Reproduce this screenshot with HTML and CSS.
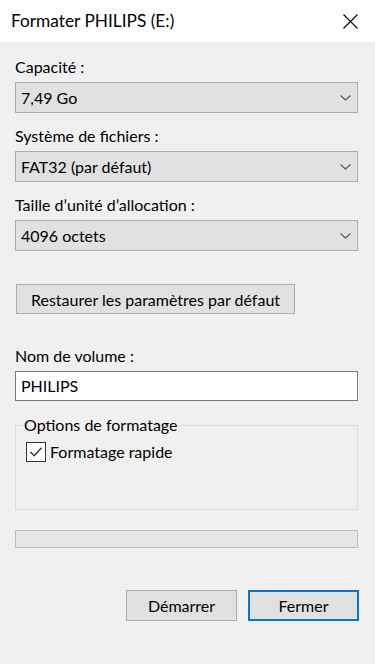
FILE: index.html
```html
<!DOCTYPE html>
<html lang="fr">
<head>
<meta charset="utf-8">
<title>Formater PHILIPS (E:)</title>
<link rel="stylesheet" href="styles.css">
</head>
<body>
<div class="window">
  <div class="titlebar">
    <span class="title">Formater PHILIPS (E:)</span>
    <svg class="close" width="15" height="15" viewBox="0 0 15 15"><path d="M0.5 0.5 L14.5 14.5 M14.5 0.5 L0.5 14.5" stroke="#000" stroke-width="1.1" fill="none"/></svg>
  </div>
  <div class="content">
    <div class="field">
      <div class="label">Capacité :</div>
      <div class="select"><span>7,49 Go</span><svg class="chev" width="11" height="6" viewBox="0 0 11 6"><path d="M0.5 0.5 L5.5 5 L10.5 0.5" stroke="#555" stroke-width="1.1" fill="none"/></svg></div>
    </div>
    <div class="field">
      <div class="label">Système de fichiers :</div>
      <div class="select"><span>FAT32 (par défaut)</span><svg class="chev" width="11" height="6" viewBox="0 0 11 6"><path d="M0.5 0.5 L5.5 5 L10.5 0.5" stroke="#555" stroke-width="1.1" fill="none"/></svg></div>
    </div>
    <div class="field">
      <div class="label">Taille d’unité d’allocation :</div>
      <div class="select"><span>4096 octets</span><svg class="chev" width="11" height="6" viewBox="0 0 11 6"><path d="M0.5 0.5 L5.5 5 L10.5 0.5" stroke="#555" stroke-width="1.1" fill="none"/></svg></div>
    </div>
    <button class="btn restore">Restaurer les paramètres par défaut</button>
    <div class="field volume">
      <div class="label">Nom de volume :</div>
      <div class="input">PHILIPS</div>
    </div>
    <fieldset class="group">
      <legend>Options de formatage</legend>
      <div class="check">
        <span class="box"><svg width="18" height="18" viewBox="0 0 18 18"><path d="M3.5 9 L7.2 12.8 L14.5 4.8" stroke="#333" stroke-width="1.4" fill="none"/></svg></span>
        <span>Formatage rapide</span>
      </div>
    </fieldset>
    <div class="progress"></div>
    <div class="actions">
      <button class="btn">Démarrer</button>
      <button class="btn primary">Fermer</button>
    </div>
  </div>
</div>
</body>
</html>
```
FILE: styles.css
```css
* { box-sizing: border-box; }
html, body {
  margin: 0;
  padding: 0;
  background: #f0f0f0;
}
body {
  font-family: Lato, "Noto Sans", sans-serif;
  font-size: 16px;
  color: #000;
}
.window {
  width: 375px;
  height: 664px;
  overflow: hidden;
}
.titlebar {
  height: 42px;
  background: #fff;
  display: flex;
  align-items: center;
  justify-content: space-between;
  padding: 0 17px 0 11px;
}
.title {
  font-size: 17.3px;
  line-height: 20px;
}
.close { display: block; }
.content {
  padding: 15px 17px 0 15px;
}
.field + .field { margin-top: 13px; }
.label {
  line-height: 20px;
  height: 20px;
  margin-bottom: 5px;
}
.select {
  height: 31px;
  border: 1px solid #adadad;
  background: #e1e1e1;
  display: flex;
  align-items: center;
  justify-content: space-between;
  padding: 0 6px 0 5px;
  line-height: 20px;
}
.chev { display: block; }
.btn {
  font-family: inherit;
  font-size: 16px;
  color: #000;
  background: #e1e1e1;
  border: 1px solid #adadad;
  height: 31px;
  padding: 0;
  margin: 0;
}
.restore {
  display: block;
  margin: 33px 0 0 1px;
  width: 279px;
  height: 30px;
}
.field.volume { margin-top: 32px; }
.input {
  height: 30px;
  background: #fff;
  border: 1px solid #7a7a7a;
  padding: 0 5px;
  line-height: 28px;
}
.group {
  margin: 14px 0 0 0;
  border: 1px solid #dcdcdc;
  padding: 7px 0 47px 10px;
  min-width: 0;
}
.group legend {
  padding: 0 1px;
  margin-left: -3px;
  line-height: 20px;
}
.check {
  display: flex;
  align-items: center;
  gap: 4px;
  height: 20px;
  line-height: 20px;
}
.box {
  width: 20px;
  height: 20px;
  border: 1px solid #333;
  background: #fff;
  display: flex;
  align-items: center;
  justify-content: center;
}
.box svg { display: block; }
.progress {
  margin-top: 20px;
  height: 18px;
  border: 1px solid #bcbcbc;
  background: #e6e6e6;
}
.actions {
  margin-top: 42px;
  margin-right: -1px;
  display: flex;
  justify-content: flex-end;
  gap: 11px;
}
.actions .btn {
  width: 111px;
  height: 31px;
}
.btn.primary {
  border: 2px solid #0078d7;
}
```
